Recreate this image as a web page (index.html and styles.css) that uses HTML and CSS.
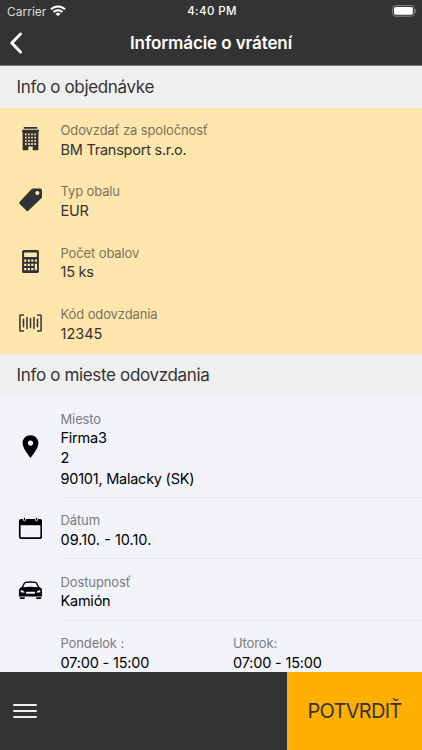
FILE: index.html
```
<!DOCTYPE html>
<html lang="sk">
<head>
  <meta charset="UTF-8">
  <meta name="viewport" content="width=device-width, initial-scale=1">
  <title>Informácie o vrátení</title>
  <link rel="stylesheet" href="styles.css">
</head>
<body>
  <div class="app">
    <header class="header">
      <div class="status">
        <div class="carrier">
          <span class="carrier-name">Carrier</span>
          <svg class="wifi" width="16" height="12" viewBox="0 0 16 12" fill="none" stroke="#fff" stroke-width="2">
            <path d="M1 4.4C5 .4 11 .4 15 4.4M3.5 7C6 4.6 10 4.6 12.5 7"/>
            <path d="M8 11.2L5.4 8.7C6.9 7.4 9.1 7.4 10.6 8.7Z" fill="#fff" stroke="none"/>
          </svg>
        </div>
        <div class="clock">4:40 PM</div>
        <svg class="battery" width="25" height="12" viewBox="0 0 25 12">
          <rect x=".6" y=".6" width="21.6" height="10.6" rx="3" fill="none" stroke="#888"/>
          <rect x="2" y="2" width="18.8" height="7.8" rx="1.8" fill="#fff"/>
          <path d="M23.2 4v4c1.6-.6 1.6-3.4 0-4z" fill="#888"/>
        </svg>
      </div>
      <div class="navbar">
        <svg class="back" width="14" height="22" viewBox="0 0 14 22" fill="none" stroke="#fff" stroke-width="3" stroke-linecap="round" stroke-linejoin="round">
          <path d="M11.5 2L2.800 11L11.5 20"/>
        </svg>
        <h1>Informácie o vrátení</h1>
      </div>
    </header>

    <main class="content">
      <h2>Info o objednávke</h2>
      <div class="list order">
        <div class="row">
          <svg class="icon" viewBox="-0.5 0 24 24">
            <path fill-rule="evenodd" d="M5.3 0h13.4v1.8H5.3zM3.5 2.8h17V5h-.6V23.2h-5.7v-3.6H9.8v3.6H4.1V5h-.6zM6.6 6.5v1.8h1.6V6.5zM9.7 6.5v1.8h1.6V6.5zM12.7 6.5v1.8h1.6V6.5zM15.8 6.5v1.8h1.6V6.5zM6.6 9.7v1.8h1.6V9.7zM9.7 9.7v1.8h1.6V9.7zM12.7 9.7v1.8h1.6V9.7zM15.8 9.7v1.8h1.6V9.7zM6.6 12.9v1.8h1.6v-1.8zM9.7 12.9v1.8h1.6v-1.8zM12.7 12.9v1.8h1.6v-1.8zM15.8 12.9v1.8h1.6v-1.8zM6.6 16.1v1.8h1.6v-1.8zM9.7 16.1v1.8h1.6v-1.8zM12.7 16.1v1.8h1.6v-1.8zM15.8 16.1v1.8h1.6v-1.8z"/>
          </svg>
          <div class="text">
            <div class="label">Odovzdať za spoločnosť</div>
            <div class="value">BM Transport s.r.o.</div>
          </div>
        </div>
        <div class="row">
          <svg class="icon" viewBox="-0.5 0 24 24">
            <path fill-rule="evenodd" d="M14.5 .5h7q2 0 2 2v6.4q0 .8-.6 1.4L10 22.5q-1.1 1-2.2 0L1.2 15.9q-1-1.1 0-2.2L12.9 1.2q.7-.7 1.6-.7zM18.8 2.9a2.1 2.1 0 1 0 .01 0z"/>
          </svg>
          <div class="text">
            <div class="label">Typ obalu</div>
            <div class="value">EUR</div>
          </div>
        </div>
        <div class="row">
          <svg class="icon" viewBox="-0.5 0 24 24">
            <path fill-rule="evenodd" d="M5.2 0h13.6q1.6 0 1.6 1.6v19.8q0 1.6-1.6 1.6H5.2q-1.6 0-1.6-1.6V1.6Q3.6 0 5.2 0zM5.6 2.5v4.6h12.8V2.5zM5.6 9.5v2.2h2.2V9.5zM9.2 9.5v2.2h2.2V9.5zM12.7 9.5v2.2h2.2V9.5zM16.3 9.5v2.2h2.2V9.5zM5.6 13.7v2.2h2.2v-2.2zM9.2 13.7v2.2h2.2v-2.2zM12.7 13.7v2.2h2.2v-2.2zM16.3 13.7v6.6h2.2v-6.6zM5.6 18v2.2h2.2V18zM9.2 18v2.2h2.2V18zM12.7 18v2.2h2.2V18z"/>
          </svg>
          <div class="text">
            <div class="label">Počet obalov</div>
            <div class="value">15 ks</div>
          </div>
        </div>
        <div class="row">
          <svg class="icon line" viewBox="-0.5 0 24 24">
            <path d="M4.8 4H2.2Q1.4 4 1.4 4.8v14.4q0 .8.8.8h2.6M19.2 4h2.6q.8 0 .8.8v14.4q0 .8-.8.8h-2.6M5 8.2v7.6M8.5 6.5v11M12 7.4v9.2M15.5 6.5v11M19 8.2v7.6"/>
          </svg>
          <div class="text">
            <div class="label">Kód odovzdania</div>
            <div class="value digits">12345</div>
          </div>
        </div>
      </div>

      <h2>Info o mieste odovzdania</h2>
      <div class="list place">
        <div class="row tall">
          <svg class="icon" viewBox="-0.5 0 24 24">
            <path fill-rule="evenodd" d="M12 .3c4.5 0 7.9 3.4 7.9 7.7 0 5.4-5.3 11-7.9 15-2.6-4-7.9-9.6-7.9-15C4.1 3.7 7.5.3 12 .3zM12 5.4a2.7 2.7 0 1 0 .01 0z"/>
          </svg>
          <div class="text">
            <div class="label">Miesto</div>
            <div class="value">Firma3<br>2<br>90101, Malacky (SK)</div>
          </div>
        </div>
        <div class="row">
          <svg class="icon" viewBox="-0.5 0 24 24">
            <path fill-rule="evenodd" d="M2.6 2h1.8q.2 2.4 1.6 2.4t1.6-2.4h8.8q.2 2.4 1.6 2.4t1.6-2.4h1.8q2.2 0 2.2 2.2v15.6q0 2.2-2.2 2.2H2.6Q.4 22 .4 19.8V4.2Q.4 2 2.6 2zM2.1 8.2v11q0 1.1 1.1 1.1h17.6q1.1 0 1.1-1.1v-11z"/>
            <path d="M5.4 .8h1.2v2.6H5.4zM17.4 .8h1.2v2.6h-1.2z"/>
          </svg>
          <div class="text">
            <div class="label">Dátum</div>
            <div class="value digits">09.10. - 10.10.</div>
          </div>
        </div>
        <div class="row">
          <svg class="icon" viewBox="-0.5 0 24 24">
            <path fill-rule="evenodd" d="M7 3.7q5-.8 10 0 1.2.2 1.7 1.2l2.1 4.2 1.4.7q1.4 1 1.4 3v5.6H.4v-5.6q0-2 1.4-3l1.4-.7L5.3 4.9Q5.8 3.9 7 3.7zM7.4 5Q6.7 5.1 6.4 5.8L4.7 9.2q7.3-.8 14.6 0L17.6 5.8q-.3-.7-1-.8-4.6-.6-9.2 0zM2.2 12v2.3l3.2.5q.8 0 .5-.8-.6-1.6-3.7-2zM21.8 12q-3.1.4-3.7 2-.3.8.5.8l3.2-.5zM7.5 13.7v2h9v-2z"/>
            <path d="M1.3 19.2h5v1q0 .8-.8.8H2.1q-.8 0-.8-.8zM17.7 19.2h5v1q0 .8-.8.8h-3.4q-.8 0-.8-.8z"/>
          </svg>
          <div class="text">
            <div class="label">Dostupnosť</div>
            <div class="value">Kamión</div>
          </div>
        </div>
        <div class="row hours">
          <div class="text">
            <div class="label">Pondelok :</div>
            <div class="value">07:00 - 15:00</div>
          </div>
          <div class="text">
            <div class="label">Utorok:</div>
            <div class="value">07:00 - 15:00</div>
          </div>
        </div>
      </div>
    </main>

    <footer class="footer">
      <div class="menu">
        <svg width="24" height="16" viewBox="0 0 24 16" stroke="#eee" stroke-width="2" stroke-linecap="round">
          <path d="M1 2h22M1 8h22M1 14h22"/>
        </svg>
      </div>
      <button class="confirm">POTVRDIŤ</button>
    </footer>
  </div>
</body>
</html>
```
FILE: styles.css
```
* {
  box-sizing: border-box;
}
body {
  margin: 0;
  font-family: Inter, "Liberation Sans", sans-serif;
  background: #f3f4f9;
}
.app {
  display: flex;
  flex-direction: column;
  height: 750px;
  overflow: hidden;
}
.header {
  height: 66px;
  flex: none;
  background: #333;
  color: #fff;
  border-bottom: 1px solid #777;
}
.status {
  display: grid;
  grid-template-columns: 1fr auto 1fr;
  align-items: center;
  height: 22px;
  padding: 0 5px 0 7px;
}
.carrier {
  display: flex;
  align-items: center;
  gap: 4px;
  font-size: 12px;
  letter-spacing: 0;
  color: #ddd;
}
.clock {
  font-size: 11.5px;
  font-weight: 500;
  letter-spacing: 0.4px;
}
.battery {
  justify-self: end;
  margin-top: -1px;
}
.navbar {
  display: grid;
  grid-template-columns: 40px 1fr 40px;
  align-items: center;
  height: 42px;
}
.back {
  margin-left: 9px;
}
h1 {
  margin: 0;
  text-align: center;
  font-size: 17px;
  font-weight: 600;
  letter-spacing: -0.1px;
}
.content {
  flex: 1;
  min-height: 0;
  overflow: hidden;
}
h2 {
  display: flex;
  align-items: center;
  height: 42.4px;
  margin: 0;
  padding-left: 16.5px;
  background: #f0f0f0;
  color: #333;
  font-size: 17px;
  font-weight: 400;
  letter-spacing: -0.34px;
}
.order {
  background: #fee6ac;
  color: #333;
}
.place {
  background: #f3f4f9;
  color: #000;
}
.row {
  display: flex;
  align-items: center;
  height: 61.3px;
  padding-left: 18px;
}
.tall {
  height: 102px;
}
.icon {
  width: 24px;
  height: 24px;
  flex: none;
  margin-right: 18.5px;
  fill: currentColor;
}
.line {
  fill: none;
  stroke: currentColor;
  stroke-width: 1.5;
  stroke-linecap: round;
}
.text {
  display: flex;
  flex-direction: column;
  justify-content: center;
  flex: 1;
  height: 100%;
  padding-top: 4px;
  border-bottom: 1px solid #e7e8ed;
}
.place .text {
  padding-top: 5.5px;
}
.order .text {
  border-color: #fae3ad;
}
.order .row:last-child .text {
  border-color: transparent;
}
.label {
  font-size: 13px;
  line-height: 18.5px;
  letter-spacing: -0.12px;
  color: #7b7b7e;
}
.order .label {
  color: #7d735d;
}
.value {
  font-size: 14.5px;
  line-height: 20.3px;
  letter-spacing: -0.24px;
}
.digits,
.hours .value {
  letter-spacing: 0;
}
.hours .value {
  letter-spacing: -0.18px;
}
.hours {
  padding-left: 60.5px;
}
.hours .text {
  flex: none;
  width: 172.5px;
}
.hours .text:last-child {
  flex: 1;
}
.footer {
  display: flex;
  flex: none;
  height: 78px;
  background: #333;
}
.menu {
  display: flex;
  align-items: center;
  width: 287px;
  padding-left: 13px;
}
.confirm {
  flex: 1;
  border: 0;
  padding: 0;
  background: #ffb000;
  color: #333;
  font-family: inherit;
  font-size: 20px;
  letter-spacing: -0.7px;
}
```
